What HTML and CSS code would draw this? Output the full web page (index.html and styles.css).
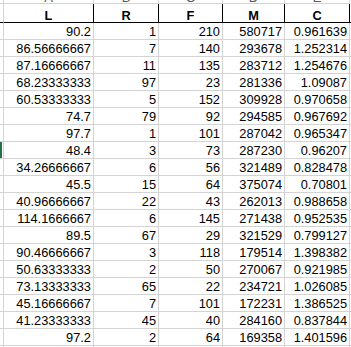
FILE: index.html
```html
<!DOCTYPE html>
<html>
<head>
<meta charset="utf-8">
<link rel="stylesheet" href="styles.css">
</head>
<body>
<div class="sheet">
  <div class="c corner"></div>
  <div class="c colhead"><span>A</span></div>
  <div class="c colhead"><span>B</span></div>
  <div class="c colhead"><span>C</span></div>
  <div class="c colhead"><span>D</span></div>
  <div class="c colhead"><span>E</span></div>
  <div class="c colhead last"></div>

  <div class="c rh hrow"></div>
  <div class="c th">L</div>
  <div class="c th">R</div>
  <div class="c th">F</div>
  <div class="c th">M</div>
  <div class="c th">C</div>
  <div class="c hrow last"></div>

  <div class="c rh"></div><div class="c n">90.2</div><div class="c n">1</div><div class="c n">210</div><div class="c n">580717</div><div class="c n">0.961639</div><div class="c last"></div>
  <div class="c rh"></div><div class="c n">86.56666667</div><div class="c n">7</div><div class="c n">140</div><div class="c n">293678</div><div class="c n">1.252314</div><div class="c last"></div>
  <div class="c rh"></div><div class="c n">87.16666667</div><div class="c n">11</div><div class="c n">135</div><div class="c n">283712</div><div class="c n">1.254676</div><div class="c last"></div>
  <div class="c rh"></div><div class="c n">68.23333333</div><div class="c n">97</div><div class="c n">23</div><div class="c n">281336</div><div class="c n">1.09087</div><div class="c last"></div>
  <div class="c rh"></div><div class="c n">60.53333333</div><div class="c n">5</div><div class="c n">152</div><div class="c n">309928</div><div class="c n">0.970658</div><div class="c last"></div>
  <div class="c rh"></div><div class="c n">74.7</div><div class="c n">79</div><div class="c n">92</div><div class="c n">294585</div><div class="c n">0.967692</div><div class="c last"></div>
  <div class="c rh"></div><div class="c n">97.7</div><div class="c n">1</div><div class="c n">101</div><div class="c n">287042</div><div class="c n">0.965347</div><div class="c last"></div>
  <div class="c rh active"></div><div class="c n">48.4</div><div class="c n">3</div><div class="c n">73</div><div class="c n">287230</div><div class="c n">0.96207</div><div class="c last"></div>
  <div class="c rh"></div><div class="c n">34.26666667</div><div class="c n">6</div><div class="c n">56</div><div class="c n">321489</div><div class="c n">0.828478</div><div class="c last"></div>
  <div class="c rh"></div><div class="c n">45.5</div><div class="c n">15</div><div class="c n">64</div><div class="c n">375074</div><div class="c n">0.70801</div><div class="c last"></div>
  <div class="c rh"></div><div class="c n">40.96666667</div><div class="c n">22</div><div class="c n">43</div><div class="c n">262013</div><div class="c n">0.988658</div><div class="c last"></div>
  <div class="c rh"></div><div class="c n">114.1666667</div><div class="c n">6</div><div class="c n">145</div><div class="c n">271438</div><div class="c n">0.952535</div><div class="c last"></div>
  <div class="c rh"></div><div class="c n">89.5</div><div class="c n">67</div><div class="c n">29</div><div class="c n">321529</div><div class="c n">0.799127</div><div class="c last"></div>
  <div class="c rh"></div><div class="c n">90.46666667</div><div class="c n">3</div><div class="c n">118</div><div class="c n">179514</div><div class="c n">1.398382</div><div class="c last"></div>
  <div class="c rh"></div><div class="c n">50.63333333</div><div class="c n">2</div><div class="c n">50</div><div class="c n">270067</div><div class="c n">0.921985</div><div class="c last"></div>
  <div class="c rh"></div><div class="c n">73.13333333</div><div class="c n">65</div><div class="c n">22</div><div class="c n">234721</div><div class="c n">1.026085</div><div class="c last"></div>
  <div class="c rh"></div><div class="c n">45.16666667</div><div class="c n">7</div><div class="c n">101</div><div class="c n">172231</div><div class="c n">1.386525</div><div class="c last"></div>
  <div class="c rh"></div><div class="c n">41.23333333</div><div class="c n">45</div><div class="c n">40</div><div class="c n">284160</div><div class="c n">0.837844</div><div class="c last"></div>
  <div class="c rh"></div><div class="c n">97.2</div><div class="c n">2</div><div class="c n">64</div><div class="c n">169358</div><div class="c n">1.401596</div><div class="c last"></div>
  <div class="c rh"></div><div class="c"></div><div class="c"></div><div class="c"></div><div class="c"></div><div class="c"></div><div class="c last"></div>
</div>
</body>
</html>
```

FILE: styles.css
```css
html, body { margin: 0; padding: 0; background: #fff; }
body { width: 351px; height: 347px; overflow: hidden; }
.sheet {
  display: grid;
  grid-template-columns: 4px 90px 65px 64px 62px 65px 1fr;
  grid-template-rows: 4px 19px;
  grid-auto-rows: 17px;
  font-family: "Liberation Sans", Arial, sans-serif;
  font-size: 12.8px;
  color: #000;
}
.c {
  box-sizing: border-box;
  border-right: 1px solid #d4d4d4;
  border-bottom: 1px solid #d4d4d4;
  overflow: hidden;
  white-space: nowrap;
}
.colhead { text-align: center; color: #5a5a5a; font-size: 13px; }
.colhead span { display: block; line-height: 13px; margin-top: -9px; }
.hrow { border-bottom: 1px solid #000; }
.th {
  border-right: 1px solid #000;
  border-bottom: 1px solid #000;
  text-align: center;
  font-weight: bold;
  line-height: 17px;
  padding-top: 3px;
}
.n { text-align: right; padding-right: 2px; line-height: 17px; }
.last { border-right: none; }
.active { box-shadow: inset 2px 0 0 #217346; }
```
